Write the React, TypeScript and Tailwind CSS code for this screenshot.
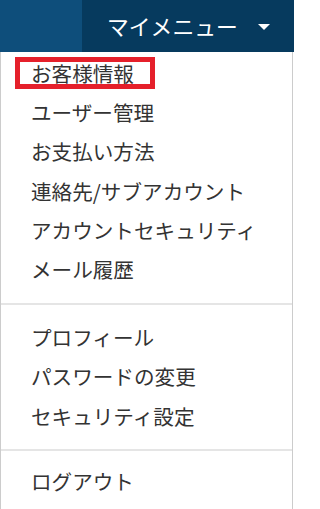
const jp = { fontFamily: '"Noto Sans CJK JP", "Noto Sans", sans-serif' };

const groups = [
  ["お客様情報", "ユーザー管理", "お支払い方法", "連絡先/サブアカウント", "アカウントセキュリティ", "メール履歴"],
  ["プロフィール", "パスワードの変更", "セキュリティ設定"],
  ["ログアウト"],
];

function Item({ label, active }: { label: string; active?: boolean }) {
  return (
    <li className="h-[39.2px] flex items-center pl-[14px]">
      <span
        className={
          "inline-block border-[5px] pl-[11px] pr-[16px] leading-[22px] text-[20.6px] text-[#333] whitespace-nowrap " +
          (active ? "border-[#e5202b]" : "border-transparent")
        }
      >
        {label}
      </span>
    </li>
  );
}

export default function App() {
  return (
    <div className="w-[294px] h-[509px] bg-white overflow-hidden" style={jp}>
      <header className="h-[52px] flex">
        <div className="w-[82px] bg-[#0e4e7b]" />
        <div className="flex-1 bg-[#063a5e] flex items-center pl-[25px] pr-[24px]">
          <span className="text-white text-[21.8px] leading-none">マイメニュー</span>
          <svg className="ml-auto mt-[1px]" width="12" height="6" viewBox="0 0 12 6">
            <path d="M0 0 L12 0 L6 6 Z" fill="#fff" />
          </svg>
        </div>
      </header>

      <nav className="w-[293px] h-[457px] border-x border-[#cccccc] pt-[1.5px]">
        <ul>
          {groups[0].map((l, i) => (
            <Item key={l} label={l} active={i === 0} />
          ))}
        </ul>
        <div className="mt-[14.5px] h-[2px] bg-[#e5e5e5]" />
        <ul className="mt-[12.5px]">
          {groups[1].map((l) => (
            <Item key={l} label={l} />
          ))}
        </ul>
        <div className="mt-[14px] h-[2px] bg-[#e5e5e5]" />
        <ul className="mt-[10.5px]">
          {groups[2].map((l) => (
            <Item key={l} label={l} />
          ))}
        </ul>
      </nav>
    </div>
  );
}
